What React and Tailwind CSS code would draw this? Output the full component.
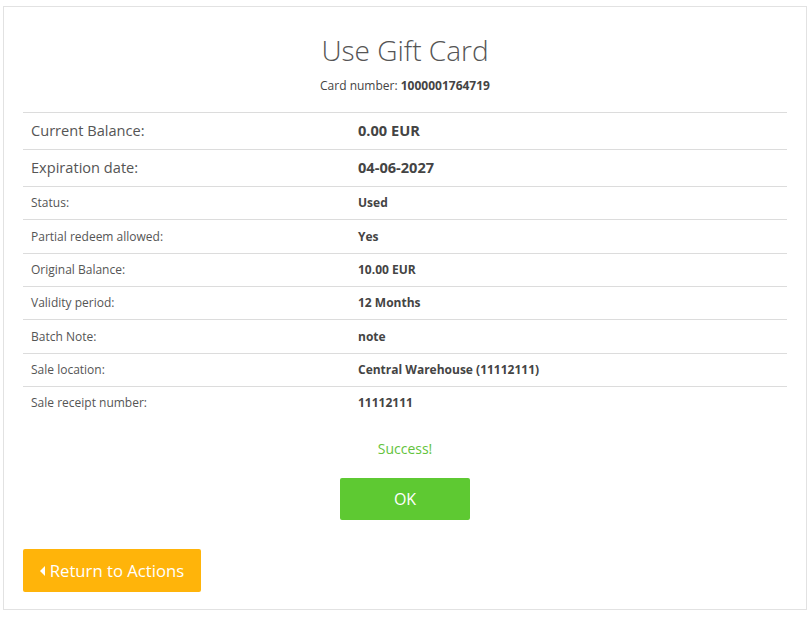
import React from 'react';

const rows = [
    { label: 'Current Balance:', value: '0.00 EUR', big: true },
    { label: 'Expiration date:', value: '04-06-2027', big: true },
    { label: 'Status:', value: 'Used' },
    { label: 'Partial redeem allowed:', value: 'Yes' },
    { label: 'Original Balance:', value: '10.00 EUR' },
    { label: 'Validity period:', value: '12 Months' },
    { label: 'Batch Note:', value: 'note' },
    { label: 'Sale location:', value: 'Central Warehouse (11112111)' },
    { label: 'Sale receipt number:', value: '11112111' },
];

const App = () => {
    return (
        <div className="bg-white min-h-[618px] pt-[6px] px-[3px]" style={{ fontFamily: '"Open Sans", "Liberation Sans", sans-serif' }}>
            <div className="border border-[#e2e2e2] px-[19px] pt-[26px] pb-[17px] text-[#555]">
                <h1 className="text-center text-[28px] leading-[34px] font-light text-[#555]">Use Gift Card</h1>
                <p className="text-center text-[12px] leading-[17px] mt-[10px] text-[#444]">
                    Card number: <span className="font-bold">1000001764719</span>
                </p>

                <div className="mt-[18px]">
                    {rows.map((row, i) => (
                        <div
                            key={row.label}
                            className={`grid grid-cols-[327px_1fr] border-t border-[#dcdcdc] ${row.big ? 'h-[37px] text-[14.6px]' : i % 3 === 0 ? 'h-[34px] text-[12px]' : 'h-[33px] text-[12px]'}`}
                        >
                            <div className="px-2 flex items-center text-[#555]">{row.label}</div>
                            <div className="px-2 flex items-center font-bold text-[#444]">{row.value}</div>
                        </div>
                    ))}
                </div>

                <p className="text-center text-[14px] leading-[20px] text-[#63c33c] mt-[20px]">Success!</p>

                <div className="flex justify-center mt-[19px]">
                    <button className="w-[130px] h-[42px] rounded-[2px] bg-[#5ec932] text-white text-[16px]">OK</button>
                </div>

                <button className="mt-[29px] w-[178px] h-[43px] rounded-[2px] bg-[#ffb40a] text-white text-[16.7px] flex items-center justify-center gap-[4px]">
                    <svg width="6" height="10" viewBox="0 0 6 10" fill="currentColor">
                        <path d="M5 0 L0 5 L5 10 Z" />
                    </svg>
                    Return to Actions
                </button>
            </div>
        </div>
    );
};

export default App;
